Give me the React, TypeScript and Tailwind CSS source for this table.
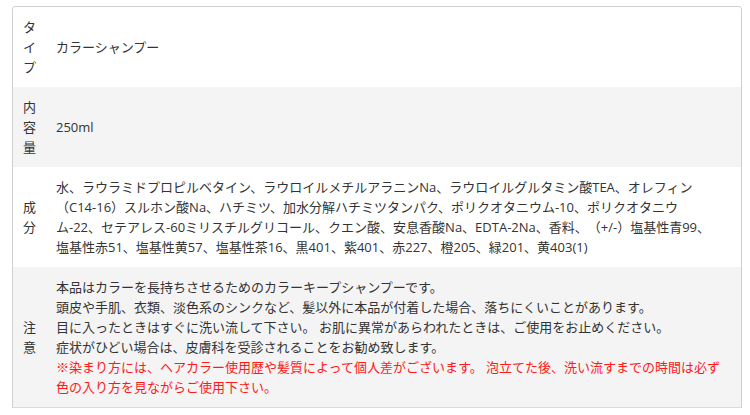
const rows: { label: string; lines: { text: string; red?: boolean }[] }[] = [
  { label: 'タイプ', lines: [{ text: 'カラーシャンプー' }] },
  { label: '内容量', lines: [{ text: '250ml' }] },
  {
    label: '成分',
    lines: [
      { text: '水、ラウラミドプロピルベタイン、ラウロイルメチルアラニンNa、ラウロイルグルタミン酸TEA、オレフィン' },
      { text: '（C14-16）スルホン酸Na、ハチミツ、加水分解ハチミツタンパク、ポリクオタニウム-10、ポリクオタニウ' },
      { text: 'ム-22、セテアレス-60ミリスチルグリコール、クエン酸、安息香酸Na、EDTA-2Na、香料、（+/-）塩基性青99、' },
      { text: '塩基性赤51、塩基性黄57、塩基性茶16、黒401、紫401、赤227、橙205、緑201、黄403(1)' },
    ],
  },
  {
    label: '注意',
    lines: [
      { text: '本品はカラーを長持ちさせるためのカラーキープシャンプーです。' },
      { text: '頭皮や手肌、衣類、淡色系のシンクなど、髪以外に本品が付着した場合、落ちにくいことがあります。' },
      { text: '目に入ったときはすぐに洗い流して下さい。 お肌に異常があらわれたときは、ご使用をお止めください。' },
      { text: '症状がひどい場合は、皮膚科を受診されることをお勧め致します。' },
      { text: '※染まり方には、ヘアカラー使用歴や髪質によって個人差がございます。 泡立てた後、洗い流すまでの時間は必ず', red: true },
      { text: '色の入り方を見ながらご使用下さい。', red: true },
    ],
  },
];

export default function App() {
  return (
    <div
      className="w-[750px] h-[415px] bg-white pt-[6px] pl-[12px]"
      style={{ fontFamily: '"Open Sans", "Noto Sans CJK JP", sans-serif' }}
    >
      <div className="w-[730px] border border-[#cfcfcf] border-b-[#dcdcdc] rounded-t-[4px] overflow-hidden text-[13px] leading-[20px] text-[#333] [text-spacing-trim:space-all]">
        {rows.map((row, i) => (
          <div key={row.label} className={`flex items-center py-[10px] ${i % 2 === 1 ? 'bg-[#f4f4f4]' : 'bg-white'}`}>
            <div className="w-[43px] shrink-0 pl-[10px]">
              <div className="w-[13px] break-all">{row.label}</div>
            </div>
            <div className="flex-1">
              {row.lines.map((l, j) => (
                <div key={j} className={`whitespace-nowrap ${l.red ? 'text-[#ff1a1a]' : ''}`}>
                  {l.text}
                </div>
              ))}
            </div>
          </div>
        ))}
      </div>
    </div>
  );
}
